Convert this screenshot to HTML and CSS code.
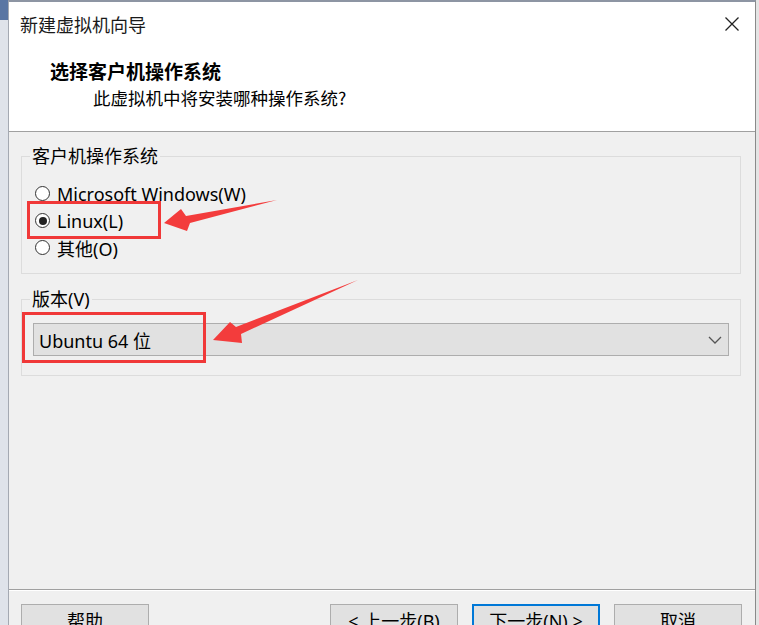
FILE: index.html
```html
<!DOCTYPE html>
<html lang="zh-CN">
<head>
<meta charset="utf-8">
<title>新建虚拟机向导</title>
<link rel="stylesheet" href="styles.css">
</head>
<body>
<div class="desktop">
  <div class="side-left"><div class="side-left-top"></div></div>
  <div class="window">
    <div class="head">
      <div class="titlebar">
        <span class="title">新建虚拟机向导</span>
        <span class="close" aria-label="关闭">
          <svg width="16" height="16" viewBox="0 0 16 16"><path d="M1.5 1.5 L14.5 14.5 M14.5 1.5 L1.5 14.5" stroke="#222" stroke-width="1.3" fill="none"/></svg>
        </span>
      </div>
      <div class="head-text">
        <div class="head-title">选择客户机操作系统</div>
        <div class="head-sub">此虚拟机中将安装哪种操作系统?</div>
      </div>
    </div>
    <div class="main">
      <fieldset class="group group-os">
        <legend class="group-label">客户机操作系统</legend>
        <div class="radios">
          <div class="radio-row"><span class="radio"></span><span>Microsoft Windows(W)</span></div>
          <div class="radio-row"><span class="radio checked"></span><span>Linux(L)</span></div>
          <div class="radio-row"><span class="radio"></span><span>其他(O)</span></div>
        </div>
      </fieldset>
      <fieldset class="group group-ver">
        <legend class="group-label">版本(V)</legend>
        <div class="combo-wrap">
          <div class="combo">
            <span>Ubuntu 64 位</span>
            <svg width="14" height="8" viewBox="0 0 14 8"><path d="M1 1 L7 7 L13 1" stroke="#555" stroke-width="1.3" fill="none"/></svg>
          </div>
        </div>
      </fieldset>
    </div>
    <div class="footer">
      <button class="btn">帮助</button>
      <div class="spacer"></div>
      <button class="btn">&lt; 上一步(B)</button>
      <button class="btn btn-default">下一步(N) &gt;</button>
      <button class="btn">取消</button>
    </div>
  </div>
  <div class="side-right"></div>
</div>
<svg class="annot" width="759" height="625" viewBox="0 0 759 625">
  <rect x="28.5" y="202.5" width="131" height="35" fill="none" stroke="#f03838" stroke-width="3"/>
  <rect x="23.5" y="313.5" width="181" height="48" fill="none" stroke="#f03838" stroke-width="3"/>
  <polygon points="164,223 181,209 186,216 277,200 190,223 187,231" fill="#f33c3c"/>
  <polygon points="213,340 230,322 236,327 358,280 241,334 242,343" fill="#f33c3c"/>
</svg>
</body>
</html>
```
FILE: styles.css
```css
* { box-sizing: border-box; }
html, body {
  margin: 0;
  padding: 0;
  width: 759px;
  height: 625px;
  overflow: hidden;
}
body {
  position: relative;
  font-family: "Noto Sans", "Noto Sans CJK SC", sans-serif;
  font-size: 18px;
  color: #000;
  background: #dde2ea;
}
.desktop {
  display: flex;
  height: 625px;
  overflow: hidden;
}
.side-left {
  width: 8px;
  flex: none;
  background: #dfe3ea;
}
.side-left-top {
  height: 20px;
  background: #5a76a3;
}
.side-right {
  width: 3px;
  flex: none;
  background: #e4e4e4;
}
.window {
  width: 748px;
  height: 660px;
  flex: none;
  display: flex;
  flex-direction: column;
  border-left: 1px solid #a4a9b2;
  border-right: 1px solid #8a8a8a;
  border-top: 2px solid #8d95a3;
  background: #f0f0f0;
}
.head {
  flex: none;
  background: #fff;
  border-bottom: 1px solid #a0a0a0;
  height: 130px;
}
.titlebar {
  height: 43px;
  display: flex;
  align-items: center;
  justify-content: space-between;
  padding: 0 15px 0 11px;
}
.title {
  font-family: "Noto Sans CJK SC", sans-serif;
  font-size: 18px;
  color: #1a1a1a;
}
.close {
  display: flex;
}
.head-text {
  padding: 12px 0 0 41px;
}
.head-title {
  font-family: "Noto Sans CJK SC", sans-serif;
  font-weight: bold;
  font-size: 19px;
  line-height: 27px;
}
.head-sub {
  font-family: "Noto Sans CJK SC", sans-serif;
  font-size: 17.5px;
  line-height: 27px;
  padding-left: 43px;
}
.main {
  height: 457px;
  flex: none;
  padding-top: 13px;
}
.group {
  margin: 0 14px 0 12px;
  padding: 0;
  border: 1px solid #dcdcdc;
  min-width: 0;
}
.group-ver {
  margin-top: 14px;
}
.group-label {
  margin-left: 8px;
  padding: 0 2px;
  line-height: 22px;
  font-size: 18px;
}
.radios {
  padding: 13px 0 12px 13px;
}
.radio-row {
  height: 27px;
  display: flex;
  align-items: center;
  gap: 7px;
}
.radio {
  flex: none;
  width: 15px;
  height: 15px;
  border-radius: 50%;
  border: 1px solid #333;
  background: #fff;
  display: flex;
  align-items: center;
  justify-content: center;
}
.radio.checked::after {
  content: "";
  width: 8px;
  height: 8px;
  border-radius: 50%;
  background: #222;
}
.combo-wrap {
  padding: 13px 11px 19px 11px;
}
.combo {
  height: 33px;
  background: #e1e1e1;
  border: 1px solid #adadad;
  display: flex;
  align-items: center;
  justify-content: space-between;
  padding: 0 6px 0 5px;
}
.footer {
  flex: none;
  border-top: 1px solid #a0a0a0;
  box-shadow: inset 0 1px 0 #fff;
  padding: 14px 13px 0 12px;
  display: flex;
  gap: 14px;
}
.spacer { flex: 1; }
.btn {
  width: 128px;
  height: 32px;
  flex: none;
  background: #e1e1e1;
  border: 1px solid #adadad;
  font-family: "Noto Sans", "Noto Sans CJK SC", sans-serif;
  font-size: 18px;
  color: #000;
  padding: 0;
}
.btn-default {
  border: 2px solid #0078d7;
}
.annot {
  position: absolute;
  left: 0;
  top: 0;
  pointer-events: none;
}
```
